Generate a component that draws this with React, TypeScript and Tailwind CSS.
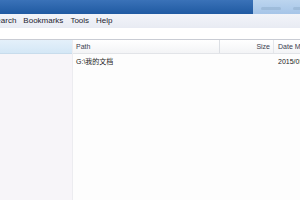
export default function App() {
  const font = { fontFamily: '"Liberation Sans", "Noto Sans CJK SC", sans-serif' };
  return (
    <div className="w-[300px] h-[200px] overflow-hidden flex flex-col bg-[#fdfdfd] text-[#222]" style={font}>
      {/* title bar */}
      <div className="h-[14px] flex shrink-0">
        <div className="w-[253px] shrink-0 bg-gradient-to-b from-[#3a72b8] to-[#1f5aa2]" />
        <div className="flex-1 bg-gradient-to-b from-[#bcd5ef] to-[#a6c5e8] flex items-center gap-[12px] pl-[8px] pt-[2px]">
          <div className="w-[20px] h-[3px] rounded-sm bg-[#93b0cf]/60" />
          <div className="w-[16px] h-[3px] rounded-sm bg-[#93b0cf]/60" />
        </div>
      </div>
      {/* menu bar */}
      <div className="h-[14px] shrink-0 bg-gradient-to-b from-[#f2f4f9] to-[#e8ebf3] flex items-center text-[8px] leading-none gap-[7px] -ml-[9px] text-[#1e2430]">
        <span>Search</span>
        <span>Bookmarks</span>
        <span>Tools</span>
        <span>Help</span>
      </div>
      {/* search box area */}
      <div className="h-[12px] shrink-0 bg-white border-b border-[#c9ccd4]" />
      {/* list */}
      <div className="flex-1 flex">
        <div className="w-[73px] shrink-0 flex flex-col border-r border-[#ececf0]">
          <div className="h-[14px] shrink-0 bg-gradient-to-b from-[#e4f0fa] to-[#d4e7f6] border-b border-[#c8dcec]" />
          <div className="flex-1 bg-[#f7f5f9]" />
        </div>
        <div className="flex-1 min-w-0 flex flex-col">
          <div className="h-[14px] shrink-0 flex text-[7px] leading-none bg-gradient-to-b from-white to-[#f3f4f6] border-b border-[#e2e4e8] text-[#3a4050]">
            <div className="w-[147px] shrink-0 border-r border-[#dcdfe4] flex items-center pl-[3px]">Path</div>
            <div className="w-[54px] shrink-0 border-r border-[#e4e6ea] flex items-center justify-end pr-[3px]">Size</div>
            <div className="flex-1 flex items-center pl-[4px] whitespace-nowrap">Date Modified</div>
          </div>
          <div className="h-[14px] flex text-[7px] leading-none items-center">
            <div className="w-[147px] shrink-0 pl-[3px]">G:\我的文档</div>
            <div className="w-[54px] shrink-0" />
            <div className="flex-1 pl-[4px] whitespace-nowrap">2015/05/12</div>
          </div>
        </div>
      </div>
    </div>
  );
}
